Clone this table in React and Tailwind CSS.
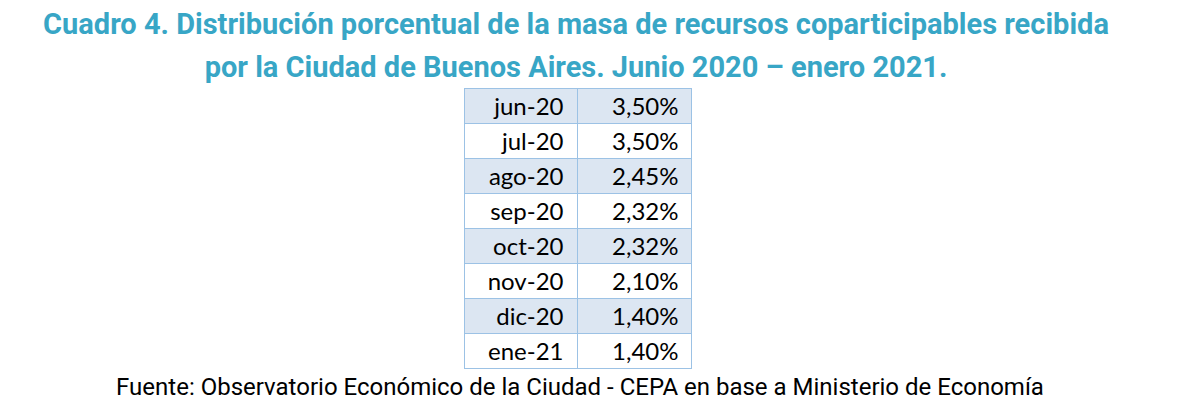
const rows = [
  ['jun-20', '3,50%'],
  ['jul-20', '3,50%'],
  ['ago-20', '2,45%'],
  ['sep-20', '2,32%'],
  ['oct-20', '2,32%'],
  ['nov-20', '2,10%'],
  ['dic-20', '1,40%'],
  ['ene-21', '1,40%'],
];

export default function App() {
  return (
    <div className="w-[1191px] h-[417px] bg-white flex flex-col items-center pt-[3px]">
      <h1
        className="text-center font-bold text-[29px] leading-[43px] text-[#38a6c6] mr-[39px] whitespace-nowrap"
        style={{ fontFamily: 'Roboto, sans-serif' }}
      >
        Cuadro 4. Distribución porcentual de la masa de recursos coparticipables recibida
        <br />
        por la Ciudad de Buenos Aires. Junio 2020 – enero 2021.
      </h1>
      <table
        className="mt-[-1px] mr-[36px] border-collapse text-[24px] text-black"
        style={{ fontFamily: 'Lato, "Open Sans", sans-serif' }}
      >
        <tbody>
          {rows.map(([m, v], i) => (
            <tr key={m} className={i % 2 === 0 ? 'bg-[#dce6f2]' : 'bg-white'}>
              <td className="w-[113px] h-[35px] border border-[#9cc2e5] text-right pr-[13px] leading-none">{m}</td>
              <td className="w-[114px] h-[35px] border border-[#9cc2e5] text-right pr-[12px] leading-none">{v}</td>
            </tr>
          ))}
        </tbody>
      </table>
      <p
        className="mt-[6px] text-[24px] leading-[24px] text-black mr-[31px] whitespace-nowrap"
        style={{ fontFamily: 'Roboto, sans-serif' }}
      >
        Fuente: Observatorio Económico de la Ciudad - CEPA en base a Ministerio de Economía
      </p>
    </div>
  );
}
